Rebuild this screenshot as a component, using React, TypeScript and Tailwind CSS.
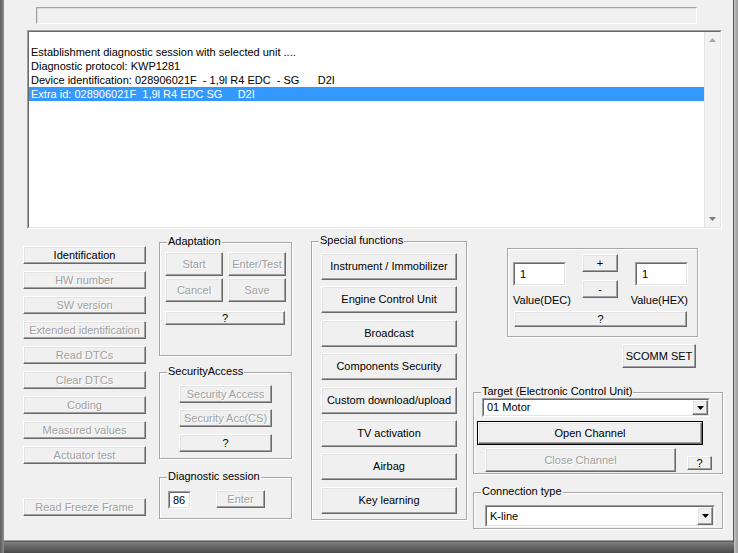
import type { ReactNode } from 'react';

// classic win32 look: raised bevel buttons, sunken edit boxes, etched group frames
const raised =
  'flex items-center justify-center bg-[#f0f0f0] border border-t-white border-l-white border-r-[#696969] border-b-[#696969] shadow-[inset_-1px_-1px_0_#a0a0a0,inset_1px_1px_0_#e3e3e3] text-[11px] leading-none select-none';

function Btn({
  children,
  className = '',
  disabled = false,
}: {
  children: ReactNode;
  className?: string;
  disabled?: boolean;
}) {
  return (
    <div
      className={`${raised} ${className} ${
        disabled ? 'text-[#a0a0a0] [text-shadow:1px_1px_0_#fff]' : 'text-black'
      }`}
    >
      {children}
    </div>
  );
}

function Sunken({ children, className = '', inner = '' }: { children?: ReactNode; className?: string; inner?: string }) {
  return (
    <div className={`border border-t-[#a0a0a0] border-l-[#a0a0a0] border-r-white border-b-white ${className}`}>
      <div className={`w-full h-full border border-t-[#696969] border-l-[#696969] border-r-[#e3e3e3] border-b-[#e3e3e3] bg-white ${inner}`}>
        {children}
      </div>
    </div>
  );
}

function Group({ label, className = '', children }: { label?: string; className?: string; children?: ReactNode }) {
  return (
    <div className={`relative border border-[#a7a7a7] shadow-[inset_1px_1px_0_#fff,1px_1px_0_#fff] ${className}`}>
      {label && (
        <span className="absolute left-[7px] top-[-8px] px-[1px] bg-[#f0f0f0] text-[11px] leading-[13px] text-black whitespace-nowrap">
          {label}
        </span>
      )}
      {children}
    </div>
  );
}

function Combo({ value, className = '' }: { value: string; className?: string }) {
  return (
    <Sunken className={className} inner="flex items-stretch">
      <div className="flex-1 flex items-center pl-[3px] text-[11px] text-black">{value}</div>
      <div className={`${raised} w-[16px]`}>
        <svg width="7" height="4" viewBox="0 0 7 4">
          <path d="M0 0h7L3.5 4z" fill="#000" />
        </svg>
      </div>
    </Sunken>
  );
}

const leftButtons = [
  'HW number',
  'SW version',
  'Extended identification',
  'Read DTCs',
  'Clear DTCs',
  'Coding',
  'Measured values',
  'Actuator test',
];

const specialFunctions = [
  'Instrument / Immobilizer',
  'Engine Control Unit',
  'Broadcast',
  'Components Security',
  'Custom download/upload',
  'TV activation',
  'Airbag',
  'Key learning',
];

const logLines = [
  '',
  'Establishment diagnostic session with selected unit ....',
  'Diagnostic protocol: KWP1281',
  'Device identification: 028906021F  - 1,9l R4 EDC  - SG      D2I',
];

export default function App() {
  return (
    <div className="w-[738px] h-[553px] flex bg-[#6f6f6f] font-['Liberation_Sans',Arial,sans-serif] overflow-hidden">
      <div className="w-[4px] bg-gradient-to-r from-[#5c5c5c] to-[#8d8d8d]" />
      <div className="w-[730px] flex flex-col">
        <div className="h-[542px] bg-[#f0f0f0] border-r border-b border-r-[#5b5b5b] border-b-[#5b5b5b] shadow-[inset_0_-1px_0_#a0a0a0] flex flex-col">
          {/* status bar */}
          <div className="ml-[32px] mt-[7px] w-[661px] h-[17px] border border-t-[#a0a0a0] border-l-[#a0a0a0] border-r-white border-b-white bg-[#f0f0f0] shadow-[inset_1px_1px_0_#dcdcdc]" />

          {/* log list */}
          <Sunken className="ml-[23px] mt-[6px] w-[695px] h-[199px]" inner="flex">
            <div className="flex-1 flex flex-col text-[11px] leading-[14px] text-black">
              {logLines.map((line, i) => (
                <div key={i} className={`${i === 0 ? 'h-[13px]' : 'h-[14px]'} pl-[2px] whitespace-pre`}>
                  {line}
                </div>
              ))}
              <div className="h-[14px] pl-[2px] whitespace-pre bg-[#3399ff] text-white">
                {'Extra id: 028906021F  1,9l R4 EDC SG     D2I'}
              </div>
            </div>
            <div className="w-[16px] bg-[#f2f2f2] border-l border-[#e4e4e4] flex flex-col items-center justify-between pt-[6px] pb-[6px]">
              <svg width="7" height="4" viewBox="0 0 7 4">
                <path d="M3.5 0L7 4H0z" fill="#a6a6a6" />
              </svg>
              <svg width="7" height="4" viewBox="0 0 7 4">
                <path d="M0 0h7L3.5 4z" fill="#7a7a7a" />
              </svg>
            </div>
          </Sunken>

          <div className="flex">
            {/* left column */}
            <div className="ml-[19px] w-[123px] pt-[17px] flex flex-col gap-[7px]">
              <Btn className="h-[18px]">Identification</Btn>
              {leftButtons.map((b) => (
                <Btn key={b} disabled className="h-[18px]">
                  {b}
                </Btn>
              ))}
              <Btn disabled className="h-[18px] mt-[27px]">
                Read Freeze Frame
              </Btn>
            </div>

            {/* adaptation / security / session */}
            <div className="ml-[13px] w-[133px] flex flex-col">
              <Group label="Adaptation" className="mt-[13px] h-[114px] pt-[9px] pl-[5px]">
                <div className="flex gap-[5px]">
                  <Btn disabled className="w-[58px] h-[24px]">Start</Btn>
                  <Btn disabled className="w-[58px] h-[24px]">Enter/Test</Btn>
                </div>
                <div className="flex gap-[5px] mt-[2px]">
                  <Btn disabled className="w-[58px] h-[24px]">Cancel</Btn>
                  <Btn disabled className="w-[58px] h-[24px]">Save</Btn>
                </div>
                <Btn className="w-[120px] h-[14px] mt-[9px]">?</Btn>
              </Group>

              <Group label="SecurityAccess" className="mt-[16px] h-[87px] pt-[12px] flex flex-col items-center">
                <Btn disabled className="w-[93px] h-[18px]">Security Access</Btn>
                <Btn disabled className="w-[93px] h-[18px] mt-[6px]">Security Acc(CS)</Btn>
                <Btn className="w-[93px] h-[18px] mt-[7px]">?</Btn>
              </Group>

              <Group label="Diagnostic session" className="mt-[18px] h-[42px] pt-[12px] pl-[8px] flex items-start">
                <Sunken className="w-[23px] h-[18px] mt-[1px]" inner="flex items-center pl-[3px] text-[11px] text-black">
                  86
                </Sunken>
                <Btn disabled className="ml-[25px] w-[49px] h-[18px]">Enter</Btn>
              </Group>
            </div>

            {/* special functions */}
            <div className="ml-[19px] w-[156px]">
              <Group label="Special functions" className="mt-[12px] h-[279px] pt-[11px] pl-[9px] flex flex-col gap-[6.4px]">
                {specialFunctions.map((f) => (
                  <Btn key={f} className="w-[136px] h-[27px]">
                    {f}
                  </Btn>
                ))}
              </Group>
            </div>

            {/* right column */}
            <div className="ml-[6px] w-[250px] flex flex-col">
              <Group className="ml-[34px] mt-[19px] w-[191px] h-[89px] pt-[5px]">
                <div className="h-[57px] flex items-start pl-[5px]">
                  <div className="w-[53px] mt-[8px] flex flex-col">
                    <Sunken className="h-[24px]" inner="flex items-center pl-[5px] text-[11px] text-black">1</Sunken>
                    <span className="mt-[8px] text-[11px] leading-[13px] text-black whitespace-nowrap">Value(DEC)</span>
                  </div>
                  <div className="ml-[16px] w-[36px] flex flex-col">
                    <Btn className="h-[18px]">+</Btn>
                    <Btn className="h-[18px] mt-[8px]">-</Btn>
                  </div>
                  <div className="ml-[17px] w-[53px] mt-[8px] flex flex-col items-end">
                    <Sunken className="w-[53px] h-[24px]" inner="flex items-center pl-[5px] text-[11px] text-black">1</Sunken>
                    <span className="mt-[8px] text-[11px] leading-[13px] text-black whitespace-nowrap">Value(HEX)</span>
                  </div>
                </div>
                <Btn className="ml-[6px] w-[173px] h-[16px]">?</Btn>
              </Group>

              <Btn className="ml-[149px] mt-[7px] w-[74px] h-[24px]">SCOMM SET</Btn>

              <Group label="Target (Electronic Control Unit)" className="mt-[24px] h-[82px] pt-[5px]">
                <Combo value="01 Motor" className="ml-[8px] w-[228px] h-[19px]" />
                <div className="ml-[3px] mt-[4px] w-[226px] h-[24px] border border-black">
                  <Btn className="w-full h-full">Open Channel</Btn>
                </div>
                <div className="flex items-start">
                  <Btn disabled className="ml-[11px] mt-[3px] w-[191px] h-[24px]">Close Channel</Btn>
                  <Btn className="ml-[11px] mt-[11px] w-[25px] h-[14px]">?</Btn>
                </div>
              </Group>

              <Group label="Connection type" className="mt-[18px] h-[37px] pt-[12px]">
                <Combo value="K-line" className="ml-[11px] w-[230px] h-[22px]" />
              </Group>
            </div>
          </div>
        </div>
        <div className="flex-1 bg-gradient-to-b from-[#7d7d7d] to-[#4a4a4a]" />
      </div>
      <div className="flex-1 bg-gradient-to-r from-[#c4c4c4] to-[#9a9a9a]" />
    </div>
  );
}
